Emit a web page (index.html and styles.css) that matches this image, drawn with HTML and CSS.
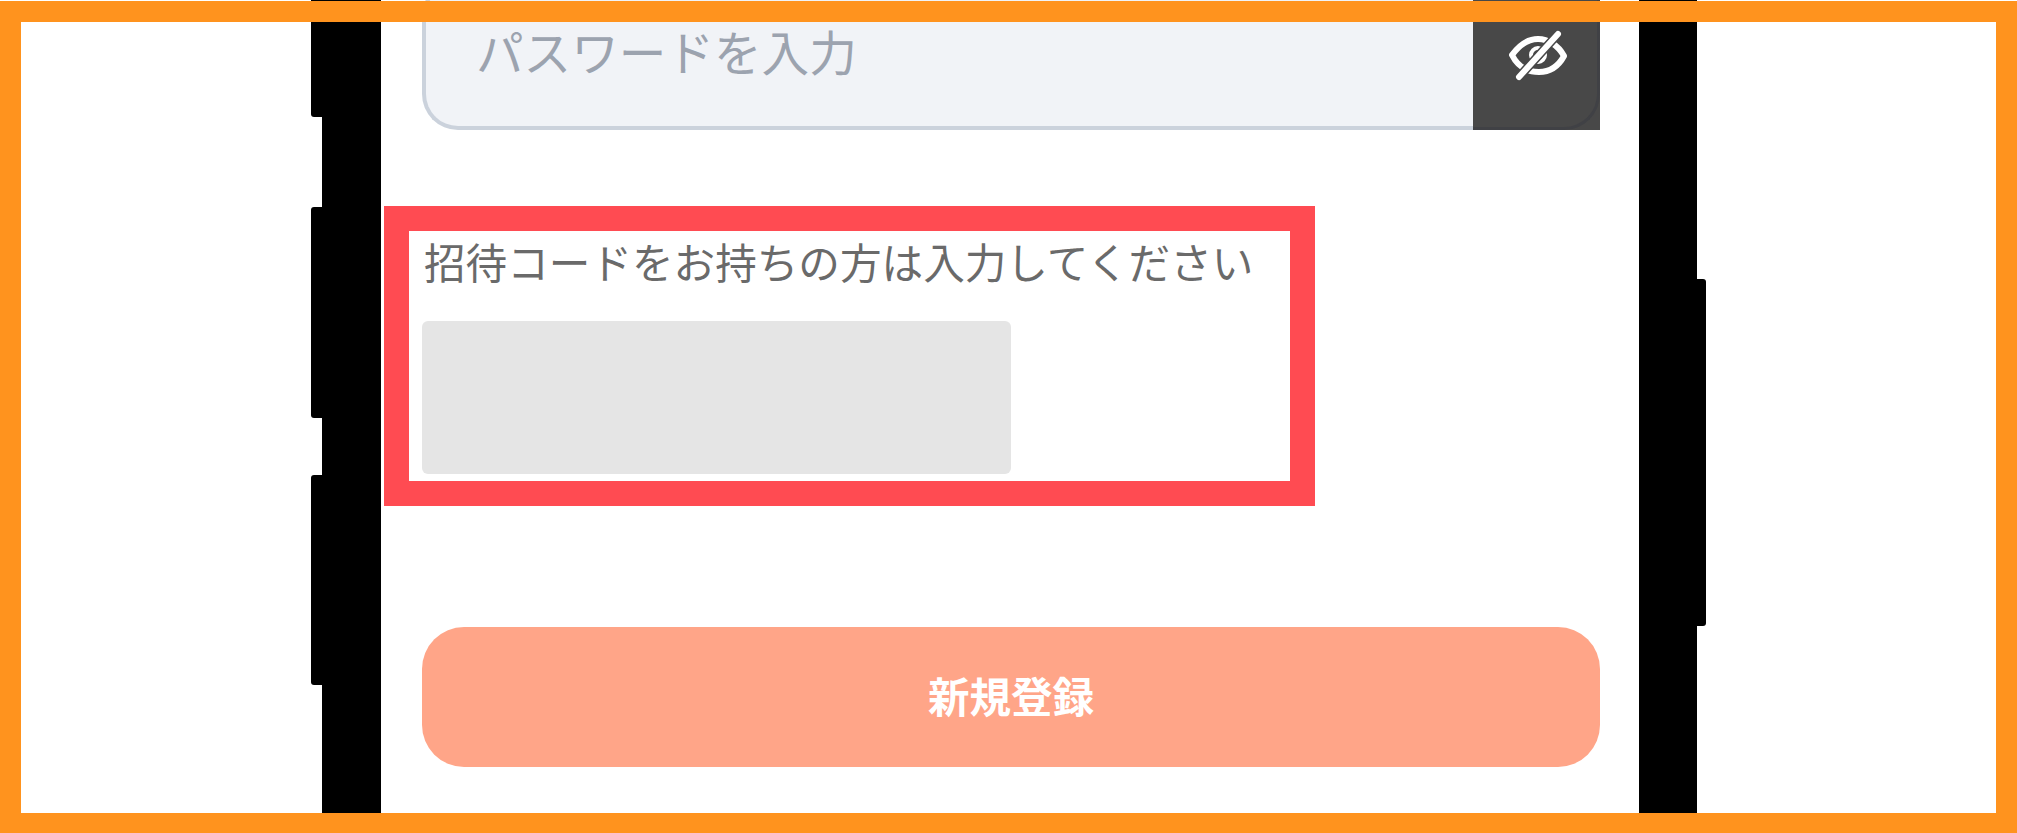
FILE: index.html
```html
<!DOCTYPE html>
<html lang="ja">
<head>
<meta charset="utf-8">
<title>新規登録</title>
<link rel="stylesheet" href="styles.css">
</head>
<body>
<div class="stage">
  <div class="phone">
    <span class="side-key key-a"></span>
    <span class="side-key key-b"></span>
    <span class="side-key key-c"></span>
    <span class="side-key key-d"></span>
    <main class="screen">
      <div class="password">
        <div class="password-field"><span class="password-hint">パスワードを入力</span></div>
        <div class="password-toggle">
          <svg class="eye" viewBox="0 0 60 60" aria-hidden="true">
            <path class="eye-line" d="M4 30C12 19 21 14 30 14C40 14 50 20 56 31C50 42 41 47 31 47C20 47 10 42 4 30Z"/>
            <circle class="eye-pupil" cx="30" cy="30" r="7"/>
            <path class="eye-gap" d="M11 52L50 9"/>
            <path class="eye-slash" d="M11 52L50 9"/>
          </svg>
        </div>
      </div>
      <section class="invite">
        <p class="invite-label">招待コードをお持ちの方は入力してください</p>
        <div class="invite-input"></div>
      </section>
      <button class="submit" type="button">新規登録</button>
    </main>
  </div>
  <div class="frame"></div>
</div>
</body>
</html>
```
FILE: styles.css
```css
* { box-sizing: border-box; }
html, body { margin: 0; padding: 0; background: #fff; }
body { overflow: hidden; font-family: "Noto Sans CJK JP", "Noto Sans", sans-serif; }

.stage { position: relative; width: 2017px; height: 833px; overflow: hidden; }

.phone {
  position: relative;
  width: 1375px;
  height: 833px;
  margin-left: 322px;
  border-left: 59px solid #000;
  border-right: 58px solid #000;
  background: #fff;
}

.side-key { position: absolute; width: 11px; background: #000; }
.key-a { left: -70px; top: -20px; height: 137px; border-radius: 3px 0 0 3px; }
.key-b { left: -70px; top: 207px; height: 211px; border-radius: 3px 0 0 3px; }
.key-c { left: -70px; top: 475px; height: 210px; border-radius: 3px 0 0 3px; }
.key-d { right: -67px; top: 279px; width: 9px; height: 347px; border-radius: 0 3px 3px 0; }

.screen { display: flow-root; padding: 0 39px 0 41px; }

.password { display: flex; height: 150px; margin-top: -20px; }
.password-field {
  flex: 1;
  display: flex;
  align-items: center;
  padding-left: 50px;
  border: 4px solid #cbd2dc;
  border-right: 0;
  border-radius: 36px 0 0 36px;
  background: #f1f3f7;
  color: #9ca3af;
  font-size: 47.6px;
}
.password-hint { margin-top: -10px; }
.password-toggle {
  position: relative;
  display: flex;
  align-items: center;
  justify-content: center;
  width: 127px;
  background: #484848;
}
.password-toggle::after {
  content: "";
  position: absolute;
  inset: 0;
  border: solid #404145;
  border-width: 0 3px 3px 0;
  border-radius: 0 0 36px 0;
}
.eye { width: 60px; height: 60px; margin: 0 0 0 3px; fill: none; stroke-linecap: round; stroke-linejoin: round; }
.eye-line, .eye-slash { stroke: #fff; stroke-width: 6; }
.eye-pupil { stroke: #fff; stroke-width: 4; }
.eye-gap { stroke: #484848; stroke-width: 9; }

.invite {
  width: 881px;
  height: 250px;
  margin: 101px 0 0 -13px;
  padding: 0 13px;
  outline: 25px solid #ff4b52;
}
.invite-label {
  margin: 0 0 0 2px;
  color: #6a6a6a;
  font-size: 41.6px;
  line-height: 61px;
  white-space: nowrap;
}
.invite-input {
  width: 589px;
  height: 153px;
  margin-top: 29px;
  border-radius: 6px;
  background: #e5e5e5;
}

.submit {
  display: block;
  width: 100%;
  height: 140px;
  margin-top: 146px;
  padding: 0 0 4px;
  border: 0;
  border-radius: 42px;
  background: #ffa588;
  color: #fff;
  font-family: inherit;
  font-size: 41.5px;
  font-weight: 700;
}

.frame {
  position: absolute;
  inset: 1px 0 0 0;
  border: solid #ff931e;
  border-width: 21px 21px 20px 21px;
}
```
